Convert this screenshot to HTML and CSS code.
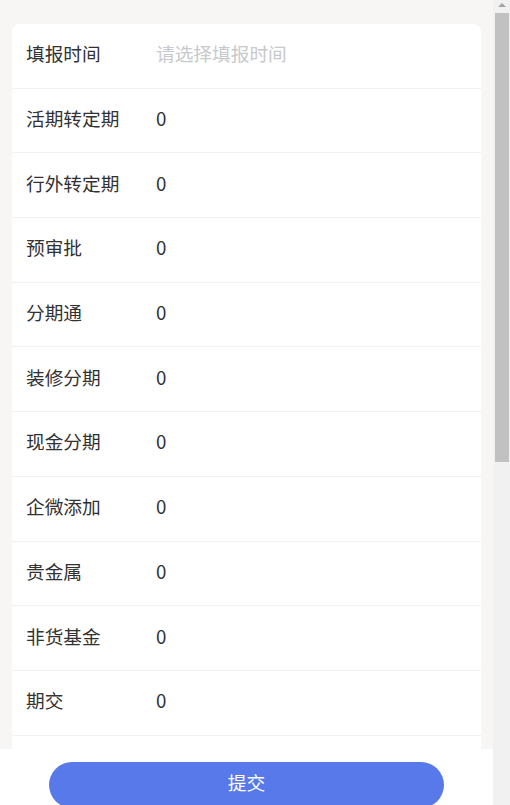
FILE: index.html
```html
<!DOCTYPE html>
<html lang="zh">
<head>
<meta charset="utf-8">
<title>填报</title>
<link rel="stylesheet" href="styles.css">
</head>
<body>
<div class="layout">
  <div class="scroller">
    <div class="page">
      <div class="card">
        <div class="row"><span class="label">填报时间</span><span class="value placeholder">请选择填报时间</span></div>
        <div class="row"><span class="label">活期转定期</span><span class="value">0</span></div>
        <div class="row"><span class="label">行外转定期</span><span class="value">0</span></div>
        <div class="row"><span class="label">预审批</span><span class="value">0</span></div>
        <div class="row"><span class="label">分期通</span><span class="value">0</span></div>
        <div class="row"><span class="label">装修分期</span><span class="value">0</span></div>
        <div class="row"><span class="label">现金分期</span><span class="value">0</span></div>
        <div class="row"><span class="label">企微添加</span><span class="value">0</span></div>
        <div class="row"><span class="label">贵金属</span><span class="value">0</span></div>
        <div class="row"><span class="label">非货基金</span><span class="value">0</span></div>
        <div class="row"><span class="label">期交</span><span class="value">0</span></div>
        <div class="row"><span class="label">趸交</span><span class="value">0</span></div>
        <div class="row"><span class="label">信用卡</span><span class="value">0</span></div>
        <div class="row"><span class="label">手机银行</span><span class="value">0</span></div>
        <div class="row"><span class="label">理财</span><span class="value">0</span></div>
        <div class="row"><span class="label">代发工资</span><span class="value">0</span></div>
        <div class="row"><span class="label">消费贷款</span><span class="value">0</span></div>
        <div class="row"><span class="label">按揭贷款</span><span class="value">0</span></div>
        <div class="row"><span class="label">社保卡</span><span class="value">0</span></div>
        <div class="row"><span class="label">其他</span><span class="value">0</span></div>
      </div>
    </div>
    <div class="footer">
      <button class="submit" type="button">提交</button>
    </div>
  </div>
  <div class="scrollbar" aria-hidden="true">
    <div class="sb-arrow"></div>
    <div class="sb-thumb"></div>
  </div>
</div>
</body>
</html>
```
FILE: styles.css
```css
html, body {
  margin: 0;
  padding: 0;
  height: 100%;
  overflow: hidden;
  background: #f7f6f5;
  font-family: "Noto Sans CJK SC", "Noto Sans", sans-serif;
}
.layout {
  display: flex;
  height: 100%;
}
.scroller {
  flex: 1;
  min-width: 0;
  height: 100%;
  overflow-y: auto;
  scrollbar-width: none;
  position: relative;
}
.scroller::-webkit-scrollbar {
  display: none;
}
.scrollbar {
  width: 17px;
  flex: none;
  background: #f1f1f1;
  display: flex;
  flex-direction: column;
  align-items: center;
}
.sb-arrow {
  width: 0;
  height: 0;
  margin: 3px 0 6px 1px;
  border-left: 4px solid transparent;
  border-right: 4px solid transparent;
  border-bottom: 4px solid #a3a3a3;
}
.sb-thumb {
  width: 14px;
  height: 449px;
  margin-left: 1px;
  background: #c1c1c1;
}
.page {
  padding: 24px 12px 95px;
}
.card {
  background: #ffffff;
  border-radius: 8px;
  overflow: hidden;
}
.row {
  display: flex;
  align-items: center;
  height: 64.7px;
  box-sizing: border-box;
  padding: 0 14px 6px;
  border-bottom: 1px solid #f2f2f2;
  font-size: 18.7px;
}
.label {
  width: 130px;
  flex: none;
  color: #323233;
}
.value {
  color: #323233;
}
.placeholder {
  color: #c8c9cc;
}
.footer {
  position: fixed;
  left: 0;
  right: 17px;
  bottom: -12px;
  background: #ffffff;
  padding: 13px 0 9px;
  display: flex;
  justify-content: center;
}
.submit {
  width: 80%;
  height: 46px;
  border: none;
  border-radius: 23px;
  background: #5779e9;
  color: #ffffff;
  font-family: "Noto Sans CJK SC", "Noto Sans", sans-serif;
  font-size: 18.7px;
  padding: 0 0 8px;
}
```
